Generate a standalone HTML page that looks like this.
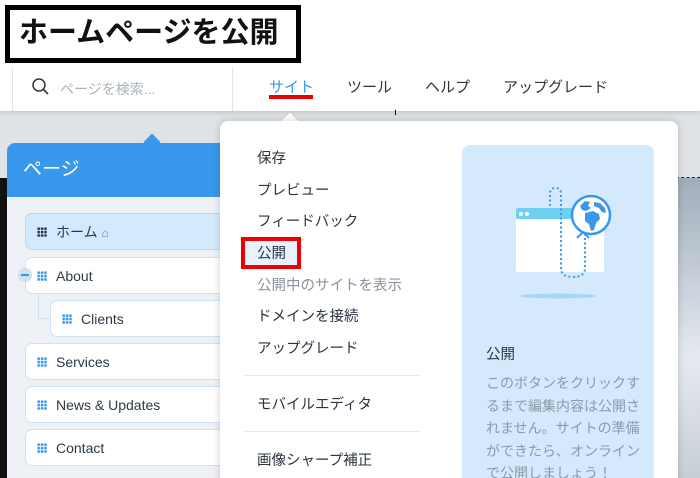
<!DOCTYPE html>
<html><head><meta charset="utf-8"><style>
*{margin:0;padding:0;box-sizing:border-box}
html,body{width:700px;height:478px;overflow:hidden}
body{position:relative;background:#fff;font-family:"Liberation Sans","Noto Sans CJK JP",sans-serif;}
.abs{position:absolute}
#title{left:5px;top:5px;width:296px;height:58px;border:5px solid #000;background:#fff;font-size:29px;font-weight:bold;line-height:46px;padding-left:9px;color:#111;white-space:nowrap;overflow:hidden}
#hdr{left:0;top:64px;width:700px;height:47px;background:#fff;box-shadow:0 2px 4px rgba(0,0,0,.12)}
.sep{top:68px;width:1px;height:43px;background:#dfe5ec}
.nav{top:78px;font-size:15px;color:#333;line-height:20px}
.mi{left:257px;font-size:14.5px;color:#2b3440;line-height:20px}
.item{position:absolute;left:25px;width:215px;height:37px;background:#fff;border:1px solid #cfe0f3;border-radius:7px;font-size:14px;color:#2b3a4a;line-height:37px;padding-left:30px}
.dots{position:absolute;left:11px;top:13px;width:10px;height:10px;background-image:radial-gradient(circle,#3899ec 1.4px,transparent 1.5px);background-size:3.4px 3.4px}
</style></head><body>
<div class="abs" style="left:0;top:110px;width:700px;height:68px;background:#dfe2e6"></div>
<div class="abs" style="left:0;top:178px;width:8px;height:300px;background:#111"></div>
<div class="abs" style="left:655px;top:178px;width:45px;height:300px;background:linear-gradient(#9fadbb,#e6eaf0 60%,#c8ced6)"></div>
<div class="abs" style="left:655px;top:177px;width:45px;border-top:1px dashed #222"></div>
<div id="hdr" class="abs"></div>
<div class="abs sep" style="left:12px"></div>
<div class="abs sep" style="left:232px"></div>
<svg class="abs" style="left:31px;top:77px" width="20" height="20" viewBox="0 0 20 20"><circle cx="8" cy="8" r="6" fill="none" stroke="#333" stroke-width="1.5"/><path d="M12.5 12.5l4.5 4.5" stroke="#333" stroke-width="1.6"/></svg>
<div class="abs" style="left:60px;top:79px;font-size:14px;color:#aab2bc">ページを検索...</div>
<div class="abs nav" style="left:269px;color:#3899ec">サイト</div>
<div class="abs" style="left:269px;top:95px;width:44px;height:4px;background:#e00"></div>
<div class="abs nav" style="left:347px">ツール</div>
<div class="abs nav" style="left:425px">ヘルプ</div>
<div class="abs nav" style="left:503px">アップグレード</div>
<div class="abs" style="left:395px;top:110px;width:1px;height:5px;background:#000"></div>
<div id="title" class="abs">ホームページを公開</div>

<div class="abs" style="left:146px;top:136px;width:12px;height:12px;background:#3899ec;transform:rotate(45deg)"></div>
<div class="abs" style="left:7px;top:143px;width:240px;height:340px;background:#eef1f5;border-radius:8px 8px 0 0;overflow:hidden">
<div style="height:54px;background:#3899ec;color:#fff;font-size:19px;line-height:54px;padding-left:16px">ページ</div></div>
<div class="item" style="top:213px;background:#d3eafc;border-color:#bcd9f3">ホーム <span style="font-size:12px;color:#6d7f92">⌂</span><div class="dots" style="background-image:radial-gradient(circle,#2b3a4a 1.4px,transparent 1.5px)"></div></div>
<div class="item" style="top:257px">About<div class="dots"></div></div>
<div class="abs" style="left:18px;top:268px;width:14px;height:14px;border-radius:7px;background:#cfe0f3"><div style="margin:6px 3px;width:8px;height:2px;background:#3899ec"></div></div>
<div class="abs" style="left:38px;top:294px;width:12px;height:25px;border-left:1px solid #cfe0f3;border-bottom:1px solid #cfe0f3"></div>
<div class="item" style="top:300px;left:50px">Clients<div class="dots"></div></div>
<div class="item" style="top:343px">Services<div class="dots"></div></div>
<div class="item" style="top:386px">News &amp; Updates<div class="dots"></div></div>
<div class="item" style="top:429px">Contact<div class="dots"></div></div>

<div class="abs" style="left:284px;top:115px;width:12px;height:12px;background:#fff;transform:rotate(45deg);box-shadow:-1px -1px 2px rgba(0,0,0,.05)"></div>
<div class="abs" style="left:220px;top:121px;width:458px;height:370px;background:#fff;border-radius:8px;box-shadow:0 0 8px rgba(0,0,0,.18)"></div>
<div class="abs" style="left:241px;top:237px;width:60px;height:32px;border:4px solid #e00;background:#e6f2fd"></div>
<div class="abs mi" style="top:149px">保存</div>
<div class="abs mi" style="top:181px">プレビュー</div>
<div class="abs mi" style="top:212px">フィードバック</div>
<div class="abs mi" style="top:244px">公開</div>
<div class="abs mi" style="top:276px;color:#8a939d">公開中のサイトを表示</div>
<div class="abs mi" style="top:307px">ドメインを接続</div>
<div class="abs mi" style="top:339px">アップグレード</div>
<div class="abs" style="left:243px;top:375px;width:177px;height:1px;background:#e6e9ed"></div>
<div class="abs mi" style="top:395px">モバイルエディタ</div>
<div class="abs" style="left:243px;top:431px;width:177px;height:1px;background:#e6e9ed"></div>
<div class="abs mi" style="top:451px">画像シャープ補正</div>

<div class="abs" style="left:462px;top:145px;width:192px;height:340px;background:#d4eafc;border-radius:8px"></div>
<svg class="abs" style="left:462px;top:180px" width="192" height="125" viewBox="0 0 192 125">
<ellipse cx="96" cy="116" rx="38" ry="2.5" fill="#a6d8f3"/>
<rect x="54" y="28" width="88" height="64" rx="2" fill="#fff"/>
<rect x="54" y="28" width="88" height="11" rx="2" fill="#6fd0f3"/>
<circle cx="59" cy="34" r="2" fill="#fff"/><circle cx="65" cy="34" r="2" fill="#fff"/>
<path d="M88 26 V14 q0-6 5.5-6 q5.5 0 5.5 6 V88 q0 9 12 9 q12 0 12-9 V54" fill="none" stroke="#3899ec" stroke-width="2" stroke-dasharray="2 2.5"/>
<path d="M115 58 l6-6 6 6" fill="none" stroke="#3899ec" stroke-width="2"/>
<circle cx="129" cy="35" r="19" fill="#fff" stroke="#3899ec" stroke-width="2.5"/>
<path d="M118 26 l5-5 5 1 -2 4 3 2 -5 3 -4-1z M123 33 l8-2 6 3 1 5 -4 4 -2 7 -3 1 -2-7 -4-3z M132 22 l6 1 5 5 1 5 -4-1 -3-4 -5-2z" fill="#3899ec"/>
</svg>
<div class="abs" style="left:486px;top:343px;font-size:14.5px;color:#2b3440">公開</div>
<div class="abs" style="left:486px;top:372px;width:155px;font-size:14px;line-height:22.5px;color:#8a9aab">このボタンをクリックするまで編集内容は公開されません。サイトの準備ができたら、オンラインで公開しましょう！</div>
</body></html>
